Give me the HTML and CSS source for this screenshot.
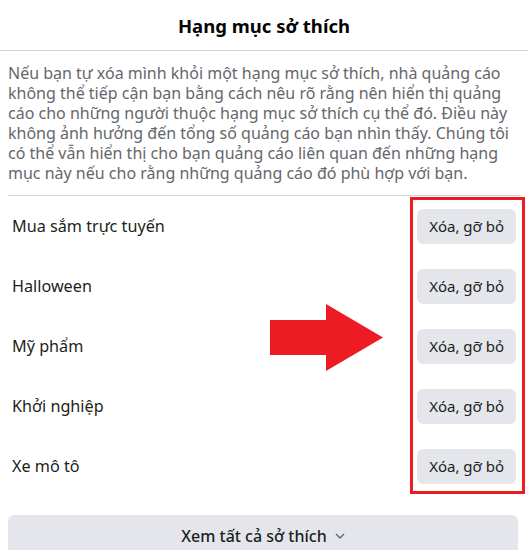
FILE: index.html
```html
<!DOCTYPE html>
<html lang="vi">
<head>
    <meta charset="UTF-8">
    <meta name="viewport" content="width=device-width, initial-scale=1.0">
    <title>Hạng mục sở thích</title>
    <link rel="stylesheet" href="styles.css">
</head>
<body>

    <!-- Header -->
    <div class="header">
        <h2>Hạng mục sở thích</h2>
    </div>

    <!-- Intro text -->
    <p class="intro">Nếu bạn tự xóa mình khỏi một hạng mục sở thích, nhà quảng cáo không thể tiếp cận bạn bằng cách nêu rõ rằng nên hiển thị quảng cáo cho những người thuộc hạng mục sở thích cụ thể đó. Điều này không ảnh hưởng đến tổng số quảng cáo bạn nhìn thấy. Chúng tôi có thể vẫn hiển thị cho bạn quảng cáo liên quan đến những hạng mục này nếu cho rằng những quảng cáo đó phù hợp với bạn.</p>

    <!-- Category list -->
    <div class="list">
        <div class="row">
            <span class="label">Mua sắm trực tuyến</span>
            <button class="remove">Xóa, gỡ bỏ</button>
        </div>
        <div class="row">
            <span class="label">Halloween</span>
            <button class="remove">Xóa, gỡ bỏ</button>
        </div>
        <div class="row">
            <span class="label">Mỹ phẩm</span>
            <button class="remove">Xóa, gỡ bỏ</button>
        </div>
        <div class="row">
            <span class="label">Khởi nghiệp</span>
            <button class="remove">Xóa, gỡ bỏ</button>
        </div>
        <div class="row">
            <span class="label">Xe mô tô</span>
            <button class="remove">Xóa, gỡ bỏ</button>
        </div>

        <!-- Highlight marks -->
        <div class="highlight"></div>
        <svg class="arrow" width="113" height="67" viewBox="0 0 113 67">
            <polygon points="0,16 56,16 56,0 113,33.5 56,67 56,51 0,51" fill="#ed1c24"/>
        </svg>
    </div>

    <!-- See all -->
    <button class="see-all">
        Xem tất cả sở thích
        <svg width="10" height="6" viewBox="0 0 10 6">
            <path d="M1 1l4 4 4-4" fill="none" stroke="#65676b" stroke-width="1.4"/>
        </svg>
    </button>

</body>
</html>
```

FILE: styles.css
```css
/* General styles */
body {
    font-family: 'Noto Sans', 'Open Sans', sans-serif;
    margin: 0;
    padding: 0;
    background-color: #ffffff;
    color: #1c1e21;
}

/* Header */
.header {
    height: 50px;
    display: flex;
    align-items: center;
    justify-content: center;
    border-bottom: 1px solid #d3d4d6;
}
.header h2 {
    margin: 0;
    font-size: 18.5px;
    font-weight: 700;
    color: #050505;
}

/* Intro text */
.intro {
    margin: 12px 8px 12px;
    font-size: 16px;
    line-height: 20px;
    color: #65676b;
}

/* Category list */
.list {
    position: relative;
    margin: 0 8px;
    border-top: 1px solid #d3d4d6;
}
.row {
    height: 60px;
    display: flex;
    align-items: center;
    justify-content: space-between;
    padding: 0 4px 0 4px;
}
.label {
    font-size: 16.2px;
    color: #1c1e21;
}
.remove {
    height: 35px;
    padding: 0 12px;
    border: none;
    border-radius: 6px;
    background-color: #e4e6eb;
    color: #1c1e21;
    font-family: inherit;
    font-size: 15px;
}

/* Highlight marks */
.highlight {
    position: absolute;
    left: 402px;
    top: 1px;
    width: 109px;
    height: 291px;
    border: 3px solid #ed1c24;
}
.arrow {
    position: absolute;
    left: 262px;
    top: 108px;
}

/* See all button */
.see-all {
    display: flex;
    align-items: center;
    justify-content: center;
    gap: 8px;
    width: calc(100% - 18px);
    height: 42px;
    margin: 19px 8px 0;
    border: none;
    border-radius: 6px;
    background-color: #e4e6eb;
    color: #1c1e21;
    font-family: inherit;
    font-size: 16px;
    font-weight: 500;
}
```
